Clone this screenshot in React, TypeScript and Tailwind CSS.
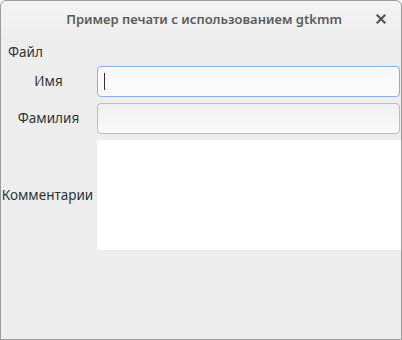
export default function App() {
  return (
    <div
      className="w-[402px] h-[340px] bg-[#ededed] border border-[#9b9b9b] rounded-t-[6px] flex flex-col overflow-hidden text-[#2e3436]"
      style={{ fontFamily: '"Noto Sans", "DejaVu Sans", sans-serif' }}
    >
      {/* title bar */}
      <div className="h-[38px] shrink-0 flex items-center relative bg-gradient-to-b from-[#f4f4f4] to-[#ededed] rounded-t-[6px]">
        <div className="flex-1 text-center text-[13px] font-semibold text-[#5a5c58] pl-[6px]">
          Пример печати с использованием gtkmm
        </div>
        <div className="absolute right-[15px] top-[13px]">
          <svg width="10" height="10" viewBox="0 0 10 10">
            <path d="M1.5 1.5 L8.5 8.5 M8.5 1.5 L1.5 8.5" stroke="#555753" strokeWidth="2.2" strokeLinecap="square" />
          </svg>
        </div>
      </div>

      {/* menubar */}
      <div className="h-[26px] shrink-0 flex items-center px-[7px] text-[13.5px]">Файл</div>

      {/* form */}
      <div className="grid grid-cols-[95px_1fr] gap-x-[1px] gap-y-[6px] pr-[1px] mt-[1px]">
        <div className="flex items-center justify-center text-[13.5px]">Имя</div>
        <div className="h-[31px] rounded-[4px] border border-[#8cade0] bg-gradient-to-b from-[#f7f7f7] to-[#fbfbfb] flex items-center pl-[6px]">
          <div className="w-[1px] h-[17px] bg-[#2e3436]" />
        </div>

        <div className="flex items-center justify-center text-[13.5px]">Фамилия</div>
        <div className="h-[31px] rounded-[4px] border border-[#bdbdbd] bg-gradient-to-b from-[#efefef] to-[#fafafa]" />

        <div className="flex items-center justify-center text-[13.5px] -ml-[2px]">Комментарии</div>
        <div className="h-[110px] bg-white -mr-[1px]" />
      </div>
    </div>
  );
}
